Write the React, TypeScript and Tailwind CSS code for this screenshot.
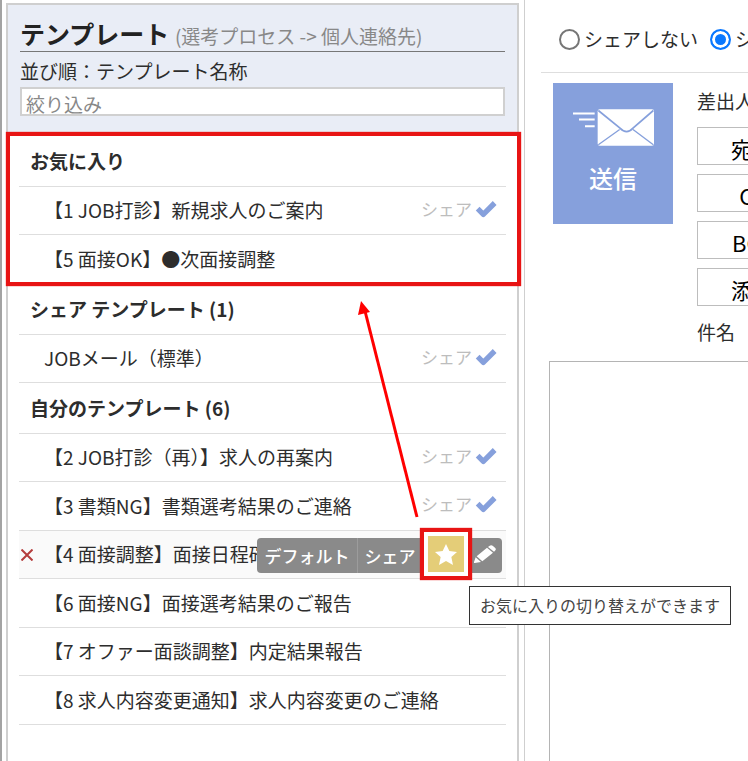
import { useState } from 'react'

type Template = {
  id: number
  name: string
  shared?: boolean
  active?: boolean
}

const favorites: Template[] = [
  { id: 1, name: '【1 JOB打診】新規求人のご案内', shared: true },
  { id: 5, name: '【5 面接OK】●次面接調整' },
]

const sharedTemplates: Template[] = [{ id: 10, name: 'JOBメール（標準）', shared: true }]

const myTemplates: Template[] = [
  { id: 2, name: '【2 JOB打診（再）】求人の再案内', shared: true },
  { id: 3, name: '【3 書類NG】書類選考結果のご連絡', shared: true },
  { id: 4, name: '【4 面接調整】面接日程確', active: true },
  { id: 6, name: '【6 面接NG】面接選考結果のご報告' },
  { id: 7, name: '【7 オファー面談調整】内定結果報告' },
  { id: 8, name: '【8 求人内容変更通知】求人内容変更のご連絡' },
]

const fields = ['宛先', 'CC', 'BCC', '添付']

function CheckIcon() {
  return (
    <svg viewBox="0 0 60 48" className="h-4 w-5 overflow-visible" fill="none" stroke="#86a0dc" aria-hidden="true">
      <path d="M5 23 22 40 56 6" strokeWidth="16" strokeLinejoin="round" />
    </svg>
  )
}

function StarIcon() {
  return (
    <svg viewBox="0 0 66 63" className="h-[21px] w-[22px] fill-white" aria-hidden="true">
      <path d="M33 0 43 21 66 24 49 39 54 63 33 51 12 63 17 39 0 24 23 21Z" />
    </svg>
  )
}

function PencilIcon() {
  return (
    <svg viewBox="0 0 66 54" className="h-[18px] w-[22px] fill-white" aria-hidden="true">
      <path d="M46 3Q51-1 56 2L63 8Q68 13 63 17L60 20 42 6ZM39 8 57 23 25 49 8 34ZM5 37 21 51 2 54Q-1 54 0 51Z" />
    </svg>
  )
}

function MailIcon() {
  return (
    <svg viewBox="0 0 243 110" className="h-[37px] w-[81px]" fill="none" aria-hidden="true">
      <path d="M0 13H65M18 31H65M36 51H65" stroke="#fff" strokeWidth="6" />
      <rect x="74" y="0" width="169" height="110" rx="6" fill="#fff" />
      <path d="M76 4 141 57Q161 78 180 57L241 4" stroke="#86a0dc" strokeWidth="5" />
      <path d="M76 107 140 61M241 107 180 61" stroke="#86a0dc" strokeWidth="4" />
    </svg>
  )
}

function RowTools() {
  return (
    <div className="absolute top-[7px] right-1 flex h-[35px] text-[17px] font-medium text-white">
      <button type="button" className="w-[100px] rounded-l bg-[#8a8a8a]">デフォルト</button>
      <button type="button" className="w-[69px] border-l border-[#9c9c9c] bg-[#8a8a8a] pr-1">シェア</button>
      <div className="relative w-[38px]">
        <div className="absolute -top-[10px] -left-[6px] z-10 border-4 border-[#e81414] bg-white p-1 shadow-[0_0_1px_#e81414]">
          <button
            type="button"
            aria-label="お気に入り"
            className="flex h-[36px] w-[36px] items-center justify-center bg-[#e4cd78]"
          >
            <StarIcon />
          </button>
        </div>
        <div
          role="tooltip"
          className="absolute top-[48px] left-[43px] z-20 border border-[#333] bg-white px-[10px] text-base leading-[37px] font-normal whitespace-nowrap text-[#444]"
        >
          お気に入りの切り替えができます
        </div>
      </div>
      <button
        type="button"
        aria-label="編集"
        className="flex w-[38px] items-center justify-center rounded-r bg-[#8a8a8a] pb-1 pl-1"
      >
        <PencilIcon />
      </button>
    </div>
  )
}

function TemplateRow({ item }: { item: Template }) {
  return (
    <li
      className={`relative flex items-center border-b border-[#dedede] pr-[10px] odd:h-12 even:h-[49px] ${
        item.active ? 'bg-[#fafafa]' : ''
      }`}
    >
      <span className="w-[25px] shrink-0">
        {item.active && (
          <button type="button" aria-label="削除" className="flex pl-[2px]">
            <svg viewBox="0 0 12 12" className="h-3 w-3" fill="none" stroke="#b43c3c" strokeWidth="2" aria-hidden="true">
              <path d="M0.5 0.5 11.5 11.5M11.5 0.5 0.5 11.5" />
            </svg>
          </button>
        )}
      </span>
      <a href="#" className="flex-1 whitespace-nowrap">{item.name}</a>
      {item.shared && (
        <span className="flex items-center gap-1 pb-1 text-[17px] text-[#bdbdbd]">
          シェア
          <CheckIcon />
        </span>
      )}
      {item.active && <RowTools />}
    </li>
  )
}

function TemplateGroup({ title, items, marked }: { title: string; items: Template[]; marked?: boolean }) {
  return (
    <section className="relative px-[11px]">
      <h2 className="flex h-[51px] items-center border-b border-[#dedede] pl-[11px] font-bold">{title}</h2>
      <ul>
        {items.map((item) => (
          <TemplateRow key={item.id} item={item} />
        ))}
      </ul>
      {marked && (
        <div className="pointer-events-none absolute -top-1 -right-1 -bottom-[2px] -left-[2px] border-4 border-[#e81414] shadow-[0_0_1px_#e81414]" />
      )}
    </section>
  )
}

export default function App() {
  const [share, setShare] = useState('on')
  const [filter, setFilter] = useState('')

  const radioClass =
    'h-[21px] w-[21px] shrink-0 appearance-none rounded-full border-2 border-[#767676] bg-white checked:border-[#0a78ff] checked:bg-[#0a78ff] checked:shadow-[inset_0_0_0_3px_white]'

  return (
    <div className="flex min-h-screen overflow-hidden border-l-2 border-[#a3a3a3] bg-white font-['Noto_Sans_CJK_JP',sans-serif] text-[19px] text-[#2d2d2d]">
      <aside className="relative z-10 mt-[3px] mr-[5px] ml-1 w-[513px] shrink-0 border-x-2 border-t-2 border-[#cfcfcf]">
        <header className="bg-[#e9edf6] px-3 pt-[10px] pb-5">
          <h1 className="border-b border-[#777] text-[25px] leading-9 font-bold whitespace-nowrap text-[#222]">
            テンプレート <span className="text-[19px] leading-none font-normal text-[#888]">(選考プロセス -&gt; 個人連絡先)</span>
          </h1>
          <p className="pt-[3px] leading-8">並び順：テンプレート名称</p>
          <input
            type="text"
            aria-label="絞り込み"
            placeholder="絞り込み"
            value={filter}
            onChange={(e) => setFilter(e.target.value)}
            className="block h-[29px] w-full border-2 border-[#d0d0d0] bg-white pt-[3px] pl-1 leading-6 placeholder:text-[#888]"
          />
        </header>

        <TemplateGroup title="お気に入り" items={favorites} marked />
        <TemplateGroup title="シェア テンプレート (1)" items={sharedTemplates} />
        <TemplateGroup title="自分のテンプレート (6)" items={myTemplates} />

        <svg
          viewBox="0 0 64 220"
          className="pointer-events-none absolute top-[296px] left-[349px] h-[220px] w-16"
          aria-hidden="true"
        >
          <path d="M60 216 8 10" stroke="#f00" strokeWidth="3" />
          <path d="M4 0 13 11 1 14Z" fill="#f00" />
        </svg>
      </aside>

      <main className="flex min-w-0 flex-1 flex-col border-l border-[#cfcfcf] pl-4">
        <div className="flex h-[73px] items-center border-b border-[#dedede] pt-[6px] pl-[18px] whitespace-nowrap">
          <label className="flex shrink-0 items-center gap-1">
            <input
              type="radio"
              name="share"
              checked={share === 'off'}
              onChange={() => setShare('off')}
              className={radioClass}
            />
            シェアしない
          </label>
          <label className="ml-3 flex shrink-0 items-center gap-1">
            <input
              type="radio"
              name="share"
              checked={share === 'on'}
              onChange={() => setShare('on')}
              className={radioClass}
            />
            シェアする
          </label>
        </div>

        <div className="flex gap-6 pt-[10px] pl-3">
          <button
            type="button"
            className="flex h-[141px] w-[120px] shrink-0 flex-col items-center gap-4 bg-[#86a0dc] pt-[26px] text-2xl font-medium text-white"
          >
            <MailIcon />
            送信
          </button>
          <div className="shrink-0 whitespace-nowrap">
            <p className="h-11 leading-9">差出人</p>
            <div className="flex flex-col gap-[9px]">
              {fields.map((field) => (
                <button
                  key={field}
                  type="button"
                  className="h-[38px] w-28 border border-[#bdbdbd] pt-1 text-[22px] leading-8 text-black"
                >
                  {field}
                </button>
              ))}
            </div>
            <p className="pt-2 leading-9">件名</p>
          </div>
        </div>

        <textarea
          aria-label="本文"
          className="mt-[11px] ml-2 flex-1 resize-none border-t border-l border-[#b4b4b4] outline-none"
        />
      </main>
    </div>
  )
}
